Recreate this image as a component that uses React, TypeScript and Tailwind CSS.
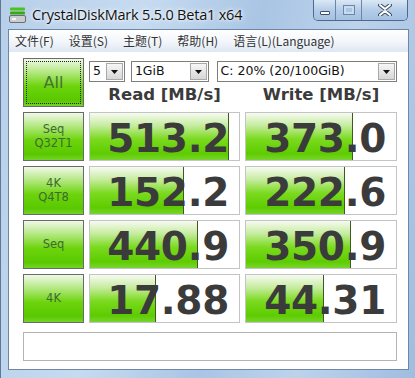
import React from 'react'

const rows = [
  { l1: 'Seq', l2: 'Q32T1', read: '513.2', readW: 139, write: '373.0', writeW: 107 },
  { l1: '4K', l2: 'Q4T8', read: '152.2', readW: 94, write: '222.6', writeW: 99 },
  { l1: 'Seq', l2: '', read: '440.9', readW: 108, write: '350.9', writeW: 105 },
  { l1: '4K', l2: '', read: '17.88', readW: 66, write: '44.31', writeW: 78 },
]

const menus = ['文件(F)', '设置(S)', '主题(T)', '帮助(H)', '语言(L)(Language)']

const btnBg =
  'bg-[linear-gradient(to_bottom,#f0f9e8_0%,#b4e882_28%,#6cd40c_58%,#5ac800_88%,#74d428_100%)]'
const fillBg =
  'bg-[linear-gradient(to_bottom,#f6fbf1_0%,#c8eca2_26%,#7ada1e_56%,#5ecc00_86%,#78d42e_100%)]'

function DriveIcon() {
  return (
    <svg width="17" height="16" viewBox="0 0 17 16">
      <rect x="1" y="0.5" width="15" height="3" rx="1" fill="#4cc21c" />
      <rect x="1" y="4.5" width="15" height="3" rx="1" fill="#3aa814" />
      <rect x="0.5" y="8.5" width="16" height="7" rx="1.5" fill="#c9ccd0" stroke="#6b6f75" />
      <rect x="3" y="11" width="4" height="2" fill="#f4f4f4" />
    </svg>
  )
}

function Select({ w, text }: { w: string; text: string }) {
  return (
    <div className={`${w} h-[21px] border border-[#7e7e7e] bg-white flex items-center`}>
      <span className="flex-1 pl-[3px] text-[12.5px] text-[#111] font-['DejaVu_Sans',sans-serif] leading-none">{text}</span>
      <div className="w-[17px] h-[17px] mr-[1px] border border-[#a9a9a9] bg-[linear-gradient(to_bottom,#f6f6f6,#d6d6d6)] flex items-center justify-center">
        <svg width="7" height="4" viewBox="0 0 7 4">
          <path d="M0 0h7L3.5 4z" fill="#111" />
        </svg>
      </div>
    </div>
  )
}

function Cell({ value, w }: { value: string; w: number }) {
  return (
    <div className="relative h-[49px] border border-[#c4c4c4] bg-white flex items-center justify-end pr-[10px] pt-[4px] overflow-hidden">
      <div className={`absolute left-0 top-0 bottom-0 ${fillBg} border-r border-[#3c5a22]`} style={{ width: w }} />
      <span className="relative text-[39px] font-bold text-[#3b3b3b] font-['DejaVu_Sans',sans-serif] leading-none tracking-[-0.3px]">
        {value}
      </span>
    </div>
  )
}

export default function App() {
  return (
    <div className="w-[415px] h-[378px] flex flex-col pl-[7px] pr-[6px] pb-[8px] border-l border-[#5f7898] bg-[linear-gradient(100deg,#b7cfe9_0%,#c6dbf0_30%,#a9c5e4_55%,#bdd3ec_75%,#9fbde0_100%)]">
      <div className="h-[29px] flex items-start">
        <div className="flex items-center gap-[6px] pt-[7px] pl-[1px]">
          <DriveIcon />
          <span className="text-[14.5px] text-[#111] font-['Open_Sans',sans-serif] leading-none tracking-[-0.2px] [text-shadow:0_0_6px_#ffffff,0_0_3px_#ffffff]">
            CrystalDiskMark 5.5.0 Beta1 x64
          </span>
        </div>
        <div className="ml-auto mr-[1px] flex h-[21px] border border-t-0 border-[#50698b] rounded-b-[5px] overflow-hidden">
          <div className="w-[22px] bg-[linear-gradient(to_bottom,#dbe8f5,#b4cde8_50%,#a4c1e2)] flex items-end justify-center pb-[5px] border-r border-[#6d86a6]">
            <div className="w-[10px] h-[4px] bg-white border border-[#3d4f66] rounded-[1px]" />
          </div>
          <div className="w-[26px] bg-[linear-gradient(to_bottom,#dbe8f5,#b4cde8_50%,#a4c1e2)] flex items-center justify-center border-r border-[#6d86a6]">
            <div className="w-[10px] h-[8px] border-[2px] border-[#c9dbee] outline outline-1 outline-[#6d86a6] bg-[#aac6e4]" />
          </div>
          <div className="w-[45px] bg-[linear-gradient(to_bottom,#dbe8f5,#b4cde8_50%,#a4c1e2)] flex items-center justify-center">
            <svg width="14" height="12" viewBox="0 0 14 12">
              <path d="M2 1l5 4 5-4M2 11l5-4 5 4" stroke="#3d4f66" strokeWidth="4" fill="none" strokeLinecap="round" />
              <path d="M2 1l5 4 5-4M2 11l5-4 5 4" stroke="#ffffff" strokeWidth="2" fill="none" strokeLinecap="round" />
            </svg>
          </div>
        </div>
      </div>

      <div className="flex-1 flex flex-col border border-[#6f87a6] bg-white">
        <div className="h-[22px] flex items-center gap-[15px] pl-[6px] bg-[linear-gradient(to_bottom,#ffffff,#f1f5fa_60%,#dfe8f3)] border-b border-[#e3e9f1]">
          {menus.map((m) => (
            <span key={m} className="text-[12px] text-[#333] font-['Noto_Sans_CJK_SC',sans-serif] leading-none">
              {m}
            </span>
          ))}
        </div>

        <div className="flex-1 flex flex-col pt-[6px] pl-[14px] pr-[12px]">
          <div className="grid grid-cols-[61px_151px_152px] gap-x-[5px] gap-y-[5px]">
            <div className={`h-[49px] border border-[#6a6a6a] ${btnBg} p-[2px]`}>
              <div className="h-full border border-dotted border-[#222] flex items-center justify-center">
                <span className="text-[16px] text-[#467236] font-['DejaVu_Sans',sans-serif] leading-none">All</span>
              </div>
            </div>
            <div className="col-span-2 h-[49px] flex flex-col pt-[3px]">
              <div className="flex items-center">
                <Select w="w-[36px]" text="5" />
                <Select w="w-[78px] ml-[6px]" text="1GiB" />
                <Select w="w-[181px] ml-[8px]" text="C: 20% (20/100GiB)" />
              </div>
              <div className="grid grid-cols-[151px_152px] gap-x-[5px] pt-[5px]">
                <span className="text-center text-[16.5px] font-bold text-[#3b3b3b] font-['DejaVu_Sans',sans-serif] leading-none">
                  Read [MB/s]
                </span>
                <span className="text-center text-[16.5px] font-bold text-[#3b3b3b] font-['DejaVu_Sans',sans-serif] leading-none">
                  Write [MB/s]
                </span>
              </div>
            </div>

            {rows.map((r, i) => (
              <React.Fragment key={i}>
                <div className={`h-[49px] border border-[#6a6a6a] ${btnBg} flex flex-col items-center justify-center gap-[3px]`}>
                  <span className="text-[11.5px] text-[#3f6a32] font-['DejaVu_Sans',sans-serif] leading-none">{r.l1}</span>
                  {r.l2 && (
                    <span className="text-[11.5px] text-[#3f6a32] font-['DejaVu_Sans',sans-serif] leading-none">{r.l2}</span>
                  )}
                </div>
                <Cell value={r.read} w={r.readW} />
                <Cell value={r.write} w={r.writeW} />
              </React.Fragment>
            ))}
          </div>
          <div className="mt-[9px] h-[29px] w-[374px] border border-[#b4b4b4] bg-white" />
        </div>
      </div>
    </div>
  )
}
